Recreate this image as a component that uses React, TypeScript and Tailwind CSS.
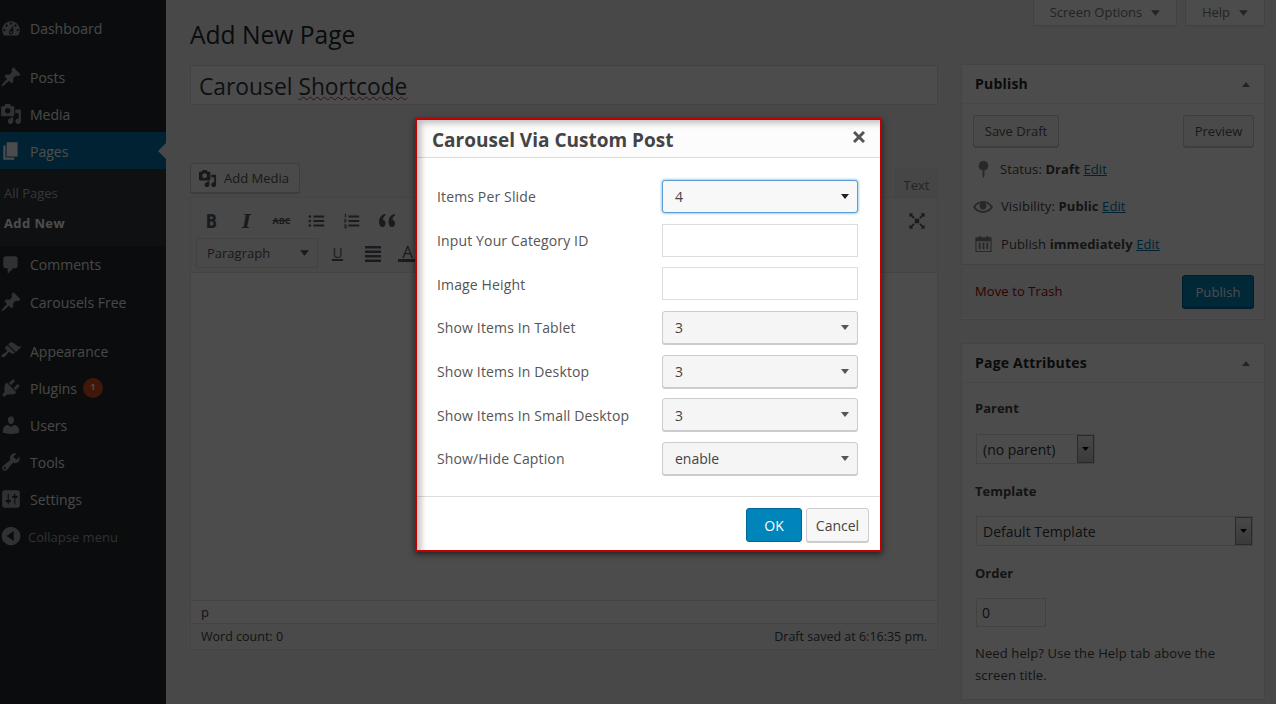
import type { ReactNode } from 'react';

const ICONS: Record<string, string> = {
  dashboard: 'M3.76 16h12.48c1.1-1.37 1.76-3.11 1.76-5 0-4.42-3.58-8-8-8s-8 3.58-8 8c0 1.89.66 3.63 1.76 5zM10 4c.55 0 1 .45 1 1s-.45 1-1 1-1-.45-1-1 .45-1 1-1zM6 6c.55 0 1 .45 1 1s-.45 1-1 1-1-.45-1-1 .45-1 1-1zm8 0c.55 0 1 .45 1 1s-.45 1-1 1-1-.45-1-1 .45-1 1-1zm-5.37 5.55L12 7v6c0 1.1-.9 2-2 2s-2-.9-2-2c0-.57.24-1.08.63-1.45zM4 10c.55 0 1 .45 1 1s-.45 1-1 1-1-.45-1-1 .45-1 1-1zm12 0c.55 0 1 .45 1 1s-.45 1-1 1-1-.45-1-1 .45-1 1-1zm-5 3c0-.55-.45-1-1-1s-1 .45-1 1 .45 1 1 1 1-.45 1-1z',
  post: 'M10.44 3.02l1.82-1.82 6.36 6.35-1.83 1.82c-1.05-.68-2.48-.57-3.41.36l-.75.75c-.92.93-1.04 2.35-.35 3.41l-1.83 1.82-2.41-2.41-2.8 2.79c-.42.42-3.38 2.71-3.8 2.29s1.86-3.39 2.28-3.81l2.79-2.79L4.1 9.36l1.83-1.82c1.05.69 2.48.57 3.4-.36l.75-.75c.93-.92 1.05-2.35.36-3.41z',
  media: 'M13 11V4c0-.55-.45-1-1-1h-1.67L9 1H5L3.67 3H2c-.55 0-1 .45-1 1v7c0 .55.45 1 1 1h10c.55 0 1-.45 1-1zM7 4.5c1.38 0 2.5 1.12 2.5 2.5S8.38 9.5 7 9.5 4.5 8.38 4.5 7 5.62 4.5 7 4.5zM14 6h5v10.5c0 1.38-1.12 2.5-2.5 2.5S14 17.88 14 16.5s1.12-2.5 2.5-2.5c.17 0 .34.02.5.05V9h-3V6zm-4 8.05V13h2v3.5c0 1.38-1.12 2.5-2.5 2.5S7 17.88 7 16.5 8.12 14 9.5 14c.17 0 .34.02.5.05z',
  page: 'M6 15V2h10v13H6zm-1 1h8v2H3V5h2v11z',
  comments: 'M5 2h9c1.1 0 2 .9 2 2v7c0 1.1-.9 2-2 2h-2l-5 5v-5H5c-1.1 0-2-.9-2-2V4c0-1.1.9-2 2-2z',
  appearance: 'M14.48 11.06L7.41 3.99l1.5-1.5c.5-.56 2.3-.47 3.51.32 1.21.8 1.43 1.28 2.91 2.1 1.18.64 2.45 1.26 4.45.85zm-.71.71L6.7 4.7 4.93 6.47c-.39.39-.39 1.02 0 1.41l1.06 1.06c.39.39.39 1.03 0 1.42-.6.6-1.43 1.11-2.21 1.69-.35.26-.7.53-1.01.84C1.43 13.23.99 14.76 1.67 15.44c.69.68 2.22.24 3.55-1.09.31-.31.58-.66.85-1.01.57-.78 1.08-1.61 1.69-2.21.39-.39 1.02-.39 1.41 0l1.06 1.06c.39.39 1.02.39 1.41 0z',
  plugins: 'M13.11 4.36L9.87 7.6 8 5.73l3.24-3.24c.35-.34 1.05-.2 1.56.32.52.51.66 1.21.31 1.55zm-8 1.77l.91-1.12 9.01 9.01-1.19.84c-.71.71-2.63 1.16-3.82 1.16H6.14L4.9 17.26c-.59.59-1.54.59-2.12 0-.59-.58-.59-1.53 0-2.12l1.24-1.24v-3.88c0-1.13.4-3.19 1.09-3.89zm7.26 3.97l3.24-3.24c.34-.35 1.04-.21 1.55.31.52.51.66 1.21.31 1.55l-3.24 3.25z',
  users: 'M10 9.25c-2.27 0-2.73-3.44-2.73-3.44C7 4.02 7.82 2 9.97 2c2.16 0 2.98 2.02 2.71 3.81 0 0-.41 3.44-2.68 3.44zm0 2.57L12.72 10c2.39 0 4.52 2.33 4.52 4.53v2.49s-3.65 1.13-7.24 1.13c-3.65 0-7.24-1.13-7.24-1.13v-2.49c0-2.25 1.94-4.48 4.47-4.48z',
  tools: 'M16.68 9.77c-1.34 1.34-3.3 1.67-4.95.99l-5.41 6.52c-.99.99-2.59.99-3.58 0s-.99-2.59 0-3.57l6.52-5.42c-.68-1.65-.35-3.61.99-4.95 1.28-1.28 3.12-1.62 4.72-1.06l-2.89 2.89 2.82 2.82 2.86-2.87c.53 1.58.18 3.39-1.08 4.65zM3.81 16.21c.4.39 1.04.39 1.43 0 .4-.4.4-1.04 0-1.43-.39-.4-1.03-.4-1.43 0-.39.39-.39 1.03 0 1.43z',
  settings: 'M18 16V4c0-1.1-.9-2-2-2H4c-1.1 0-2 .9-2 2v12c0 1.1.9 2 2 2h12c1.1 0 2-.9 2-2zM8 11h1c.55 0 1 .45 1 1s-.45 1-1 1H8v1.5c0 .28-.22.5-.5.5s-.5-.22-.5-.5V13H6c-.55 0-1-.45-1-1s.45-1 1-1h1V5.5c0-.28.22-.5.5-.5s.5.22.5.5V11zm5-2h-1c-.55 0-1-.45-1-1s.45-1 1-1h1V5.5c0-.28.22-.5.5-.5s.5.22.5.5V7h1c.55 0 1 .45 1 1s-.45 1-1 1h-1v5.5c0 .28-.22.5-.5.5s-.5-.22-.5-.5V9z',
  collapse: 'M10 1.500a8.500 8.500 0 1 1 0 17 8.500 8.500 0 0 1 0-17zM12.500 5.500L6 10l6.500 4.500z',
  status: 'M10 1a5 5 0 0 1 1 9.900V17l-1 2-1-2V10.900A5 5 0 0 1 10 1z',
  eye: 'M19.7 9.4C17.7 6 14 3.9 10 3.9S2.3 6 .3 9.4L0 10l.3.6c2 3.4 5.7 5.5 9.7 5.5s7.7-2.1 9.7-5.5l.3-.6-.3-.6zM10 14.1c-3.1 0-6-1.6-7.7-4.1C3.6 8 5.7 6.6 8 6.1c-.9.6-1.5 1.7-1.5 2.9 0 1.9 1.6 3.5 3.5 3.5s3.5-1.6 3.5-3.5c0-1.2-.6-2.3-1.5-2.9 2.3.5 4.4 1.900 5.7 3.900-1.700 2.500-4.600 4.100-7.700 4.100z',
  calendar: 'M1.500 3.500H5V2h2v1.500h6V2h2v1.500h3.500V19h-17V3.500zM2.700 7.500v10.300h14.600V7.500H2.700zM5 9h2v7H5V9zm4 0h2v7H9V9zm4 0h2v7h-2V9z',
  ul: 'M2 3.500a1.500 1.500 0 1 1 0 3 1.500 1.500 0 0 1 0-3zm0 5a1.500 1.500 0 1 1 0 3 1.500 1.500 0 0 1 0-3zm0 5a1.500 1.500 0 1 1 0 3 1.500 1.500 0 0 1 0-3zM6 4h12v2H6V4zm0 5h12v2H6V9zm0 5h12v2H6v-2z',
  ol: 'M6 4h12v2H6V4zm0 5h12v2H6V9zm0 5h12v2H6v-2zM2 2h1.300v4H2V2zM1 8h3v1L2.400 10.500H4v1H1v-1L2.600 9H1V8zm0 6h3v4H1v-1h2v-.5H1.800v-1H3V15H1v-1z',
  quote: 'M8.500 3v1.500C6.800 5.200 6 6.800 6 9c1.500 0 2.500 1.200 2.500 3.200S7.400 16 5.500 16 2 14 2 11C2 6.500 4.500 3.600 8.500 3zm9.500 0v1.500C16.300 5.200 15.500 6.800 15.500 9c1.500 0 2.500 1.200 2.500 3.200S16.900 16 15 16s-3.500-2-3.500-5c0-4.500 2.500-7.400 6.500-8z',
  justify: 'M2 3h16v2.600H2V3zm0 4.500h16v2.600H2V7.500zM2 12h16v2.600H2V12zm0 4.500h16V19H2v-2.500z',
  fullscreen: 'M7.500 7.500h5v5h-5v-5zM1.500 1.500H6L4.500 3l3 3L6 7.500l-3-3L1.500 6V1.500zm17 0V6L17 4.500l-3 3L12.500 6l3-3L14 1.500h4.500zm0 17H14l1.500-1.500-3-3 1.500-1.500 3 3 1.500-1.500v4.500zm-17 0V14L3 15.500l3-3L7.500 14l-3 3L6 18.500H1.500z',
};

function Icon({ name, className }: { name: string; className: string }) {
  return (
    <svg viewBox="0 0 20 20" className={className} fill="currentColor" fillRule="evenodd">
      <path d={ICONS[name]} />
    </svg>
  );
}

function Caret({ className }: { className: string }) {
  return (
    <svg viewBox="0 0 10 6" className={className} fill="currentColor">
      <path d="M0 0h10L5 6z" />
    </svg>
  );
}

function MenuItem({ icon, label, active, flat, children }: { icon: string; label: string; active?: boolean; flat?: boolean; children?: ReactNode }) {
  return (
    <div className={`relative flex h-[37px] items-center text-sm ${active ? 'bg-[#0073aa] text-white' : 'text-[#eeeeee]'}`}>
      <Icon name={icon} className={`h-[22px] w-[22px] shrink-0 ${active ? 'text-white' : 'text-[#a0a5aa]'}`} />
      <span className={flat ? 'ml-2' : 'ml-2 pt-[2px]'}>{label}</span>
      {children}
    </div>
  );
}

function Sidebar() {
  return (
    <aside className="w-[166px] shrink-0 bg-[#23282d] pt-[10px]">
      <MenuItem icon="dashboard" label="Dashboard" flat />
      <div className="h-[11px]" />
      <MenuItem icon="post" label="Posts" />
      <MenuItem icon="media" label="Media" />
      <MenuItem icon="page" label="Pages" active>
        <span className="absolute right-0 top-[11px] h-0 w-0 border-y-[8px] border-r-[8px] border-y-transparent border-r-[#f1f1f1]" />
      </MenuItem>
      <div className="flex h-[77px] flex-col bg-[#32373c] pl-1 pt-[15px] text-[13px] text-[#b4b9be]">
        <span className="h-[18px] leading-[18px]">All Pages</span>
        <span className="mt-3 h-[18px] font-bold leading-[18px] tracking-[0.4px] text-white">Add New</span>
      </div>
      <MenuItem icon="comments" label="Comments" flat />
      <MenuItem icon="post" label="Carousels Free" />
      <div className="h-3" />
      <MenuItem icon="appearance" label="Appearance" />
      <MenuItem icon="plugins" label="Plugins">
        <span className="ml-[6px] flex h-5 w-5 items-center justify-center rounded-full bg-[#d54e21] text-[9px] font-bold text-white">1</span>
      </MenuItem>
      <MenuItem icon="users" label="Users" />
      <MenuItem icon="tools" label="Tools" />
      <MenuItem icon="settings" label="Settings" />
      <div className="flex h-[37px] items-center text-[13px] text-[#a0a5aa]">
        <Icon name="collapse" className="h-[22px] w-[22px] shrink-0" />
        <span className="ml-[6px] pt-[5px]">Collapse menu</span>
      </div>
    </aside>
  );
}

function Editor() {
  return (
    <div className="flex h-[453px] flex-col border border-[#e5e5e5] bg-white">
      <div className="h-[75px] border-b border-[#e5e5e5] bg-[#f5f5f5] text-[#555d66]">
        <div className="flex h-[40px] items-center justify-between pl-[3px] pr-[11px] pt-[6px]">
          <div className="flex items-center">
            <span className="w-[35px] scale-x-75 text-center font-['DejaVu_Sans'] text-[20px] font-bold leading-5">B</span>
            <span className="w-[35px] text-center font-['DejaVu_Serif'] text-[19px] font-bold italic leading-5">I</span>
            <span className="w-[35px] text-center text-[9px] font-bold leading-5 line-through">ABC</span>
            <span className="flex w-[35px] justify-center"><Icon name="ul" className="h-[18px] w-[18px]" /></span>
            <span className="flex w-[35px] justify-center"><Icon name="ol" className="h-[18px] w-[18px]" /></span>
            <span className="flex w-[35px] justify-center"><Icon name="quote" className="h-5 w-5" /></span>
          </div>
          <Icon name="fullscreen" className="h-[18px] w-[18px]" />
        </div>
        <div className="flex h-[30px] items-center pl-[5px]">
          <div className="flex h-[30px] w-[122px] items-center justify-between border border-[#dddddd] pl-[10px] pr-[8px] text-[13px] text-[#555555]">
            <span className="pt-[2px]">Paragraph</span>
            <Caret className="h-[6px] w-[9px]" />
          </div>
          <div className="ml-[2px] flex items-center">
            <span className="flex w-[35px] justify-center"><span className="h-[15px] border-b-2 border-[#555d66] text-[14px] leading-[13px]">U</span></span>
            <span className="flex w-[35px] justify-center"><Icon name="justify" className="h-5 w-5" /></span>
            <span className="flex w-[35px] justify-center"><span className="h-[18px] w-[19px] border-b-[3px] border-[#555d66] text-center text-[17px] leading-[15px]">A</span></span>
          </div>
        </div>
      </div>
      <div className="flex-1" />
      <div className="flex h-[23px] items-center border-t border-[#e5e5e5] pl-[10px] pt-[2px] text-[13px] text-[#444444]">p</div>
      <div className="flex h-[26px] items-center justify-between border-t border-[#e5e5e5] bg-[#f7f7f7] pl-[10px] pr-[10px] pt-[2px] text-[12.5px] text-[#444444]">
        <span>Word count: 0</span>
        <span>Draft saved at 6:16:35 pm.</span>
      </div>
    </div>
  );
}

function LeftColumn() {
  return (
    <div className="w-[748px] shrink-0 pt-[19px]">
      <h1 className="h-8 text-[24.6px] font-normal leading-8 text-[#23282d]">Add New Page</h1>
      <div className="mt-[14px] flex h-10 items-center border border-[#dddddd] bg-white pl-2 pt-[4px] text-[22.8px] text-[#32373c]">
        <span>
          Carousel <span className="underline decoration-[#dc2626] decoration-wavy decoration-1">Shortcode</span>
        </span>
      </div>
      <div className="mt-[58px] flex h-[34px] items-start justify-between">
        <div className="flex h-[30px] w-[110px] items-center rounded-[3px] border border-[#cccccc] bg-[#f7f7f7] pl-[7px] text-[13px] text-[#555555] shadow-[0_1px_0_#cccccc]">
          <Icon name="media" className="h-[19px] w-[19px]" />
          <span className="ml-[7px] pt-[2px]">Add Media</span>
        </div>
        <div className="mt-[6px] flex h-7 w-[43px] items-center justify-center border border-b-0 border-[#e5e5e5] bg-[#ebebeb] pt-[5px] text-[13px] text-[#777777]">Text</div>
      </div>
      <Editor />
    </div>
  );
}

function MetaButton({ className, children }: { className: string; children: ReactNode }) {
  return (
    <div className={`flex h-[32px] items-center justify-center rounded-[3px] border border-[#cccccc] bg-[#f7f7f7] pt-[2px] text-[13px] text-[#555555] shadow-[0_1px_0_#cccccc] ${className}`}>
      {children}
    </div>
  );
}

function StatusRow({ icon, iconClass, gap, label, value, textClass }: { icon: string; iconClass: string; gap: string; label: string; value: string; textClass?: string }) {
  return (
    <div className="flex h-[37px] items-center text-[13px] tracking-[0.1px] text-[#444444]">
      <span className={`flex justify-center ${gap}`}>
        <Icon name={icon} className={`text-[#82878c] ${iconClass}`} />
      </span>
      <span className={textClass}>
        {label} <b>{value}</b> <a className="text-[#0073aa] underline">Edit</a>
      </span>
    </div>
  );
}

function BoxHeader({ title }: { title: string }) {
  return (
    <div className="flex h-[39px] items-center justify-between border-b border-[#eeeeee] pl-[13px] pr-[14px]">
      <span className="text-sm font-bold tracking-[0.2px] text-[#23282d]">{title}</span>
      <Caret className="h-[5px] w-[8px] rotate-180 text-[#72777c]" />
    </div>
  );
}

function OldSelect({ className, label }: { className: string; label: string }) {
  return (
    <div className={`ml-[1px] flex h-[30px] items-center justify-between border border-[#dddddd] bg-white pl-[6px] text-sm text-[#32373c] ${className}`}>
      <span className="pt-[2px]">{label}</span>
      <span className="flex h-[28px] w-[17px] items-center justify-center border border-[#8c8c8c] bg-gradient-to-b from-[#f0f0f0] to-[#c4c4c4] text-black">
        <Caret className="h-[4px] w-[7px]" />
      </span>
    </div>
  );
}

function RightColumn() {
  return (
    <div className="w-[304px] shrink-0">
      <div className="flex h-[26px] justify-end gap-2 text-[13px] text-[#72777c]">
        <div className="flex w-[144px] items-center justify-center gap-[9px] border border-t-0 border-[#dddddd] bg-white shadow-[0_1px_1px_rgba(0,0,0,0.04)]">
          Screen Options <Caret className="h-[6px] w-[9px]" />
        </div>
        <div className="flex w-[80px] items-center justify-center gap-[9px] border border-t-0 border-[#dddddd] bg-white shadow-[0_1px_1px_rgba(0,0,0,0.04)]">
          Help <Caret className="h-[6px] w-[9px]" />
        </div>
      </div>

      <div className="mt-[38px] h-[256px] border border-[#e5e5e5] bg-white">
        <BoxHeader title="Publish" />
        <div className="flex justify-between pl-[11px] pr-[10px] pt-[11px]">
          <MetaButton className="w-[86px]">Save Draft</MetaButton>
          <MetaButton className="w-[71px]">Preview</MetaButton>
        </div>
        <div className="pl-[11px] pt-[4px]">
          <StatusRow icon="status" iconClass="h-[19px] w-[19px]" gap="mr-[7px] w-[20px]" label="Status:" value="Draft" />
          <StatusRow icon="eye" iconClass="h-5 w-5" gap="mr-[8px] w-[20px]" label="Visibility:" value="Public" />
          <StatusRow icon="calendar" iconClass="h-[19px] w-[19px]" gap="mr-[8px] w-[20px]" label="Publish" value="immediately" textClass="pt-[2px]" />
        </div>
        <div className="mt-[2px] flex h-[54px] items-center justify-between border-t border-[#dddddd] bg-[#f5f5f5] pl-[13px] pr-[10px] text-[13px] tracking-[0.1px]">
          <span className="pt-[1px] text-[#aa0000]">Move to Trash</span>
          <div className="flex h-[33px] w-[72px] items-center justify-center rounded-[3px] border border-[#006799] bg-[#0085ba] pt-[2px] text-[#ffffff] shadow-[0_1px_0_#006799]">Publish</div>
        </div>
      </div>

      <div className="mt-[23px] h-[357px] border border-[#e5e5e5] bg-white">
        <BoxHeader title="Page Attributes" />
        <div className="pl-[13px] pr-[11px] text-[13px] text-[#444444]">
          <p className="mt-[15px] h-[20px] font-bold leading-5">Parent</p>
          <OldSelect className="mt-4 w-[119px]" label="(no parent)" />
          <p className="mt-[17px] h-[20px] font-bold leading-5">Template</p>
          <OldSelect className="mt-[15px] w-[277px]" label="Default Template" />
          <p className="mt-[17px] h-[20px] font-bold leading-5">Order</p>
          <div className="ml-[1px] mt-[15px] flex h-[29px] w-[70px] items-center border border-[#dddddd] pl-[5px] text-sm text-[#32373c]">0</div>
          <p className="mt-[15px] w-[275px] leading-[22px] tracking-[0.12px] text-[#444444]">Need help? Use the Help tab above the screen title.</p>
        </div>
      </div>
    </div>
  );
}

function DialogRow({ label, flat, children }: { label: string; flat?: boolean; children: ReactNode }) {
  return (
    <div className="mb-[10.65px] flex h-[33px] items-center">
      <label className={`w-[225px] text-sm tracking-[0.14px] text-[#555555] ${flat ? '' : 'pt-[2px]'}`}>{label}</label>
      {children}
    </div>
  );
}

function DialogSelect({ value, focused }: { value: string; focused?: boolean }) {
  return (
    <div
      className={`flex h-[33px] w-[196px] items-center justify-between rounded-[3px] border pl-3 pr-[8px] text-sm text-[#444444] ${
        focused ? 'border-[#5b9dd9] bg-[#f8f8f8] shadow-[0_0_3px_rgba(30,140,190,0.8)]' : 'border-[#cccccc] bg-[#f5f5f5] shadow-[0_1px_0_#cccccc]'
      }`}
    >
      <span className={focused ? '' : 'pt-[2px]'}>{value}</span>
      <Caret className={`h-[5px] w-[8px] ${focused ? 'text-[#222222]' : 'text-[#555555]'}`} />
    </div>
  );
}

function DialogInput() {
  return <div className="h-[33px] w-[196px] border border-[#dddddd] bg-white" />;
}

function Dialog() {
  return (
    <div className="absolute left-[415px] top-[118px] flex h-[434px] w-[467px] flex-col border-2 border-[#c00000] bg-white shadow-[0_2px_6px_rgba(0,0,0,0.6)]">
      <div className="flex h-[38px] shrink-0 items-center justify-between border-b border-[#dddddd] bg-[#fcfcfc] pl-[15px] pr-[15px]">
        <h2 className="pt-[4px] text-[19px] font-bold text-[#444444]">Carousel Via Custom Post</h2>
        <svg viewBox="0 0 12 12" className="mb-1 h-3 w-3 text-[#555555]" fill="none" stroke="currentColor" strokeWidth="3">
          <path d="M1 1l10 10M11 1L1 11" />
        </svg>
      </div>
      <div className="flex-1 pl-5 pr-[22px] pt-[22px]">
        <DialogRow label="Items Per Slide" flat><DialogSelect value="4" focused /></DialogRow>
        <DialogRow label="Input Your Category ID"><DialogInput /></DialogRow>
        <DialogRow label="Image Height"><DialogInput /></DialogRow>
        <DialogRow label="Show Items In Tablet"><DialogSelect value="3" /></DialogRow>
        <DialogRow label="Show Items In Desktop"><DialogSelect value="3" /></DialogRow>
        <DialogRow label="Show Items In Small Desktop"><DialogSelect value="3" /></DialogRow>
        <DialogRow label="Show/Hide Caption"><DialogSelect value="enable" /></DialogRow>
      </div>
      <div className="flex h-[54px] shrink-0 items-start justify-end gap-1 border-t border-[#dddddd] pr-[11px] pt-[11px] text-sm">
        <div className="flex h-[34px] w-[56px] items-center justify-center rounded-[3px] border border-[#006799] bg-[#0085ba] pt-[2px] text-white">OK</div>
        <div className="flex h-[34px] w-[63px] items-center justify-center rounded-[3px] border border-[#cccccc] bg-[#f7f7f7] pt-[2px] text-[#444444] shadow-[0_1px_0_#cccccc]">Cancel</div>
      </div>
      <div className="pointer-events-none absolute inset-0 shadow-[inset_7px_6px_6px_-3px_rgba(0,0,0,0.25)]" />
    </div>
  );
}

export default function App() {
  return (
    <div className="relative flex h-[704px] w-[1276px] overflow-hidden bg-[#f1f1f1] font-['Open_Sans',sans-serif]">
      <Sidebar />
      <main className="flex flex-1 gap-[23px] pl-6">
        <LeftColumn />
        <RightColumn />
      </main>
      <div className="absolute inset-0 bg-black/70" />
      <Dialog />
    </div>
  );
}
